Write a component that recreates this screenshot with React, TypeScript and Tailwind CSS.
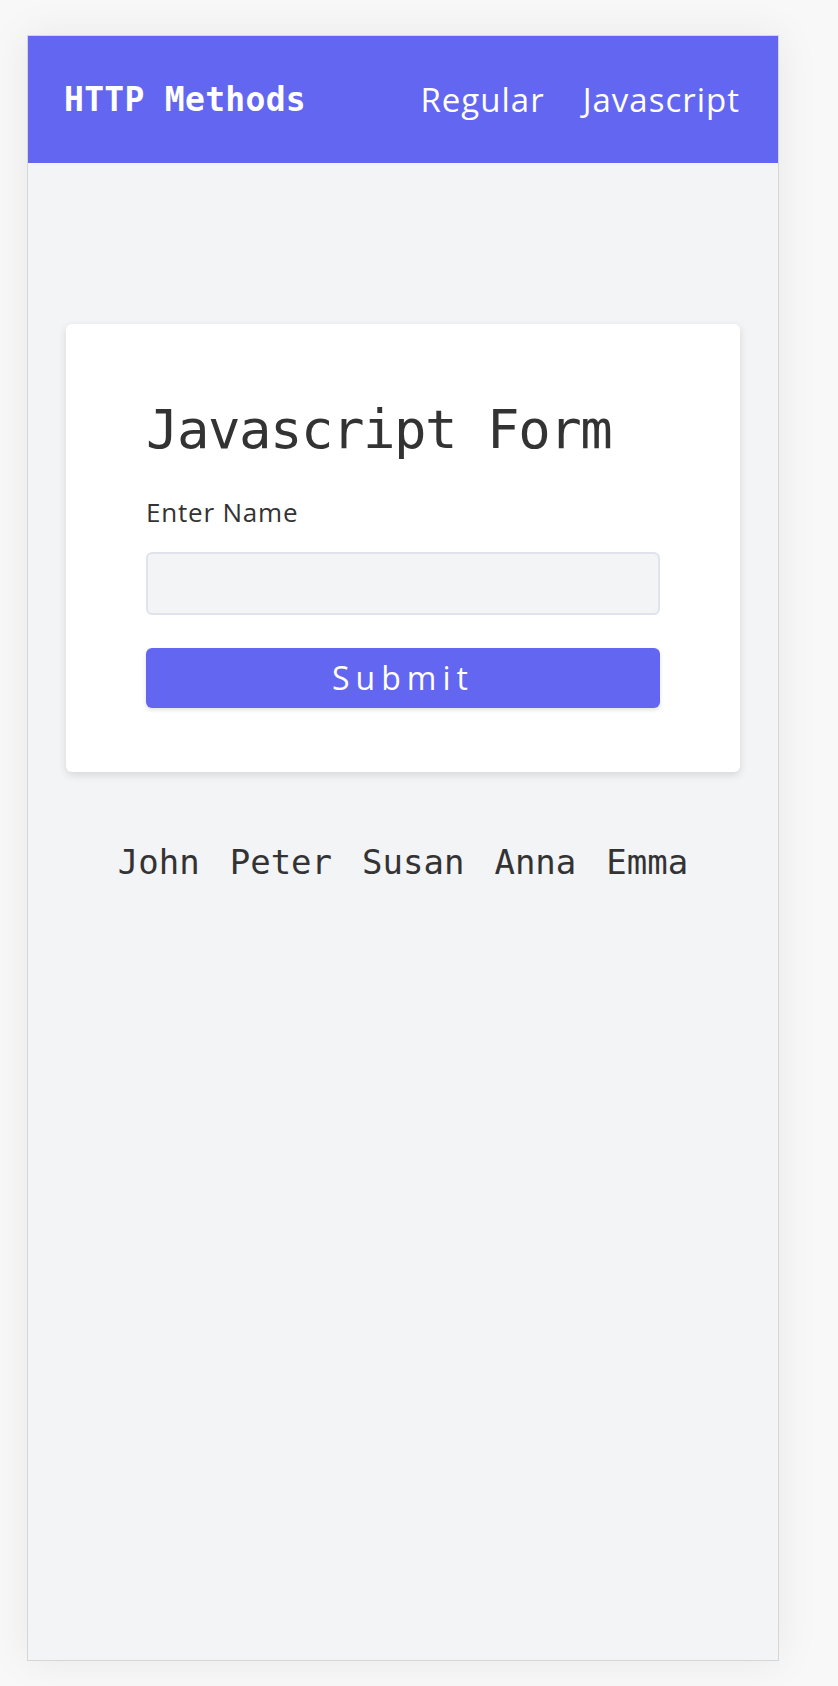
const names = ["John", "Peter", "Susan", "Anna", "Emma"];

const mono = "font-['DejaVu_Sans_Mono','Liberation_Mono',monospace]";
const sans = "font-['Open_Sans','Lato',sans-serif]";

export default function App() {
  return (
    <main className="min-h-screen bg-[#f8f8f8] pl-[27px] pt-[35px]">
      <div className="flex h-[1626px] w-[752px] flex-col border border-[#d6d6d6] bg-[#f3f4f6] shadow-[0_0_40px_rgba(0,0,0,0.07)]">
        <header className="flex h-[127px] items-center justify-between bg-[#6366f1] pl-[36px] pr-[38px] text-white">
          <h1 className={`${mono} text-[33px] font-bold leading-none tracking-[0.3px]`}>HTTP Methods</h1>
          <nav className={`${sans} flex gap-[38px] text-[33px] leading-none tracking-[1px]`}>
            <a href="#">Regular</a>
            <a href="#">Javascript</a>
          </nav>
        </header>

        <section className="mx-[38px] mt-[161px] rounded-md bg-white px-[80px] pb-[64px] pt-[75px] shadow-[0_3px_8px_rgba(0,0,0,0.12)]">
          <h2 className={`${mono} text-[54px] leading-[62px] tracking-[-1.5px] text-[#333]`}>
            Javascript Form
          </h2>

          <form className="mt-[35px] flex flex-col">
            <label className={`${sans} text-[26px] leading-[32px] tracking-[0.8px] text-[#333]`}>Enter Name</label>
            <input
              type="text"
              className="mt-[24px] h-[63px] rounded-md border-2 border-[#dfe3eb] bg-[#f3f4f6] px-4 outline-none"
            />
            <button
              type="button"
              className={`${sans} mt-[33px] h-[60px] rounded-md bg-[#6366f1] text-[32px] leading-[60px] tracking-[6px] text-white shadow-[0_2px_4px_rgba(0,0,0,0.12)]`}
            >
              Submit
            </button>
          </form>
        </section>

        <ul className={`${mono} mt-[68px] flex justify-center gap-[30px] text-[34px] leading-[44px] text-[#333]`}>
          {names.map((name) => (
            <li key={name}>{name}</li>
          ))}
        </ul>
      </div>
    </main>
  );
}
